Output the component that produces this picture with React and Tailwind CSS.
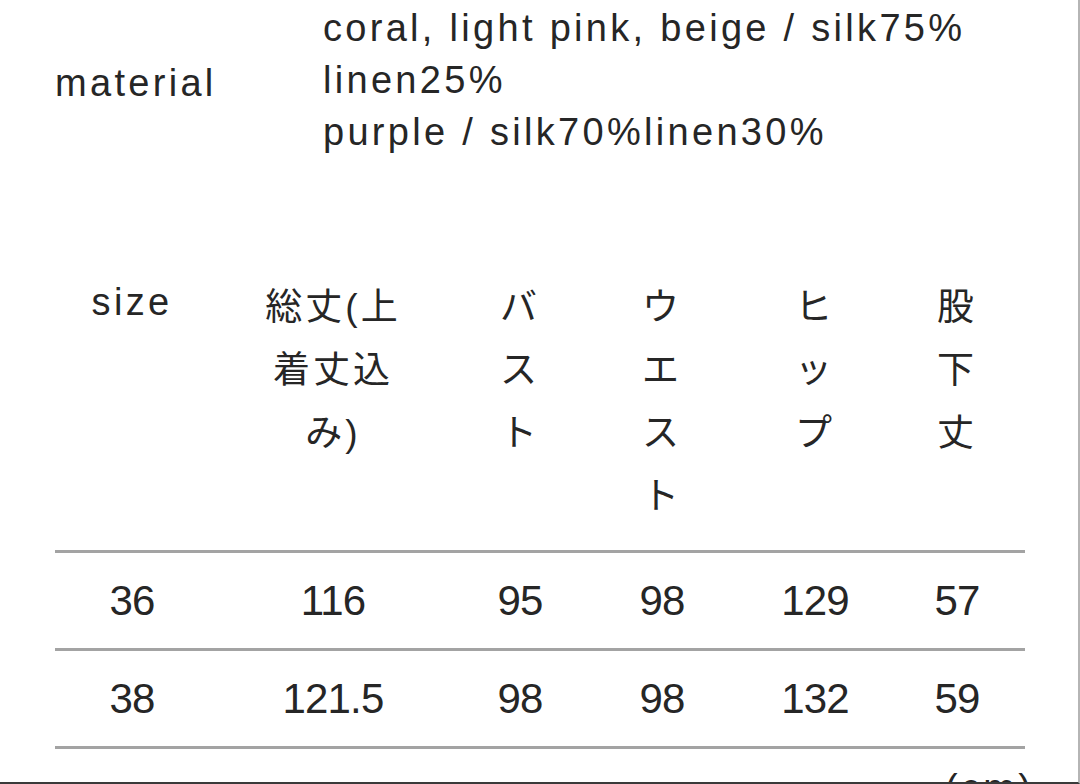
const columns = [
  { w: 'w-[154px]', head: ['size'], latin: true, rows: ['36', '38'] },
  { w: 'w-[248px]', head: ['総丈(上', '着丈込', 'み)'], rows: ['116', '121.5'] },
  { w: 'w-[126px]', head: ['バ', 'ス', 'ト'], rows: ['95', '98'] },
  { w: 'w-[158px]', head: ['ウ', 'エ', 'ス', 'ト'], rows: ['98', '98'] },
  { w: 'w-[148px]', head: ['ヒ', 'ッ', 'プ'], rows: ['129', '132'] },
  { w: 'w-[136px]', head: ['股', '下', '丈'], rows: ['57', '59'] },
];

function Rule() {
  return <div className="h-[3px] w-[970px] bg-[#a3a3a3]" />;
}

function DataRow({ index }) {
  return (
    <div className="flex h-[95px] items-center">
      {columns.map((col) => (
        <div key={col.w} className={`${col.w} text-center text-[42px] tracking-[-0.8px]`}>
          {col.rows[index]}
        </div>
      ))}
    </div>
  );
}

export default function App() {
  return (
    <div
      className="relative h-[784px] w-[1080px] overflow-hidden border-r-2 border-b-2 border-r-[#b5b5b5] border-b-[#3a3a3a] bg-white text-[#262626]"
      style={{ fontFamily: '"Liberation Sans", "Noto Sans CJK JP", Arial, sans-serif' }}
    >
      {/* material block */}
      <div className="flex items-center pt-[2px] pl-[55px] text-[38px] tracking-[3.3px]">
        <div className="w-[268px] pt-[6px]">material</div>
        <div className="leading-[52px]">
          <div>coral, light pink, beige / silk75%</div>
          <div>linen25%</div>
          <div>purple / silk70%linen30%</div>
        </div>
      </div>

      {/* size table */}
      <div className="mt-[118px] ml-[55px] w-[970px]">
        <div className="flex pb-[22px]">
          {columns.map((col) => (
            <div key={col.w} className={`${col.w} flex h-[252px] flex-col items-center`}>
              {col.head.map((line, i) =>
                col.latin ? (
                  <div key={i} className="-mt-[5px] text-[38px] leading-[63px] tracking-[3.3px]">
                    {line}
                  </div>
                ) : (
                  <div key={i} className="text-[37px] leading-[63px] tracking-[3px]">
                    {line}
                  </div>
                )
              )}
            </div>
          ))}
        </div>
        <Rule />
        <DataRow index={0} />
        <Rule />
        <DataRow index={1} />
        <Rule />
        <div className="mt-[13px] pl-[890px] whitespace-nowrap text-[38px] leading-[52px] tracking-[3.3px]">
          (cm)
        </div>
      </div>
    </div>
  );
}
